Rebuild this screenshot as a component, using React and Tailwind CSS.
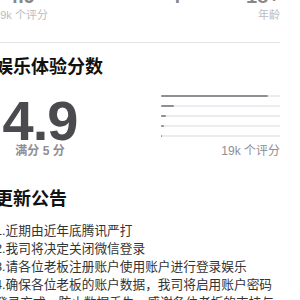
const bars = [90, 11, 4, 2.5, 1];

const notes = [
  "1.近期由近年底腾讯严打",
  "2.我司将决定关闭微信登录",
  "3.请各位老板注册账户使用账户进行登录娱乐",
  "4.确保各位老板的账户数据，我司将启用账户密码",
  "登录方式，防止数据丢失，感谢各位老板的支持与",
];

export default function App() {
  return (
    <div className="w-[300px] h-[300px] overflow-hidden bg-white font-['Liberation_Sans','Noto_Sans_CJK_SC',sans-serif]">
      <div className="ml-[-5px] w-[285px]">
        {/* header stats, scrolled off the top */}
        <div className="flex mt-[-16px]">
          <div className="flex flex-col items-center w-[60px] ml-[-4px]">
            <span className="text-[20px] leading-[24px] font-bold text-[#86868b]">4.9</span>
            <span className="text-[11px] leading-[14px] text-[#bcbcc0] whitespace-nowrap">19k 个评分</span>
          </div>
          <div className="flex flex-col items-center w-[40px] ml-[104px]">
            <span className="text-[20px] leading-[24px] font-bold text-[#86868b]">4</span>
          </div>
          <div className="flex flex-col items-end ml-auto">
            <span className="text-[20px] leading-[24px] font-bold text-[#86868b]">18+</span>
            <span className="text-[11px] leading-[14px] text-[#bcbcc0]">年龄</span>
          </div>
        </div>

        <div className="mt-[20px] border-t border-[#e3e3e6]" />

        <h2 className="mt-[12px] text-[18px] leading-[24px] font-bold text-[#111]">娱乐体验分数</h2>

        <div className="flex mt-[20px]">
          <div className="flex flex-col items-center w-[90px]">
            <span className="text-[56px] leading-[44px] font-bold text-[#4a4a4f] tracking-[-1px]">4.9</span>
            <span className="mt-[1px] text-[12px] leading-[14px] font-bold text-[#8e8e93] whitespace-nowrap">满分 5 分</span>
          </div>
          <div className="ml-auto w-[119px] flex flex-col mt-[-4px]">
            <div className="flex flex-col gap-[8px]">
              {bars.map((w, i) => (
                <div key={i} className="h-[2px] bg-[#ececee] rounded-full">
                  <div className="h-full bg-[#8e8e93] rounded-full" style={{ width: `${w}%` }} />
                </div>
              ))}
            </div>
            <span className="mt-[6px] self-end text-[12px] leading-[16px] text-[#8e8e93] whitespace-nowrap">19k 个评分</span>
          </div>
        </div>

        <h2 className="mt-[28px] text-[18px] leading-[24px] font-bold text-[#111]">更新公告</h2>

        <div className="mt-[11px] text-[12.7px] leading-[18px] text-[#333]">
          {notes.map((n, i) => (
            <div key={i} className="whitespace-nowrap">{n}</div>
          ))}
        </div>
      </div>
    </div>
  );
}
